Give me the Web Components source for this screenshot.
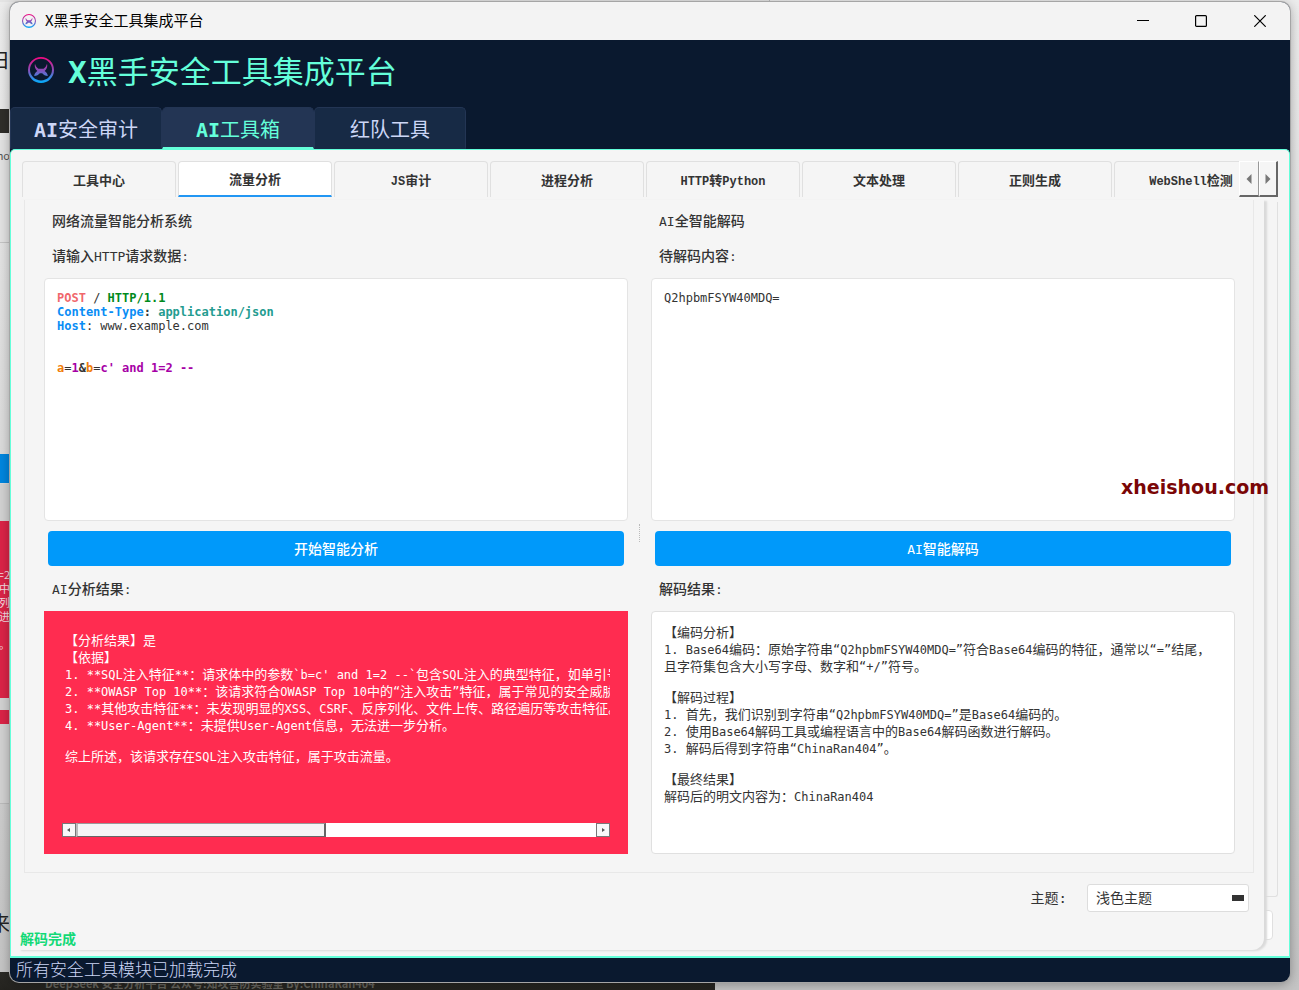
<!DOCTYPE html>
<html lang="zh-CN">
<head>
<meta charset="utf-8">
<title>X黑手安全工具集成平台</title>
<style>
html, body { margin: 0; height: 100%; overflow: hidden; }
body {
  --mono: "DejaVu Sans Mono", "Noto Sans CJK SC", monospace;
  --sans: "Noto Sans CJK SC", sans-serif;
  --song: "DejaVu Sans Mono", "Noto Sans CJK SC", monospace;
  --navy: #0a192f;
  --teal: #64ffda;
  --paper: #f5f5f5;
  --line: #e0e0e0;
  --ink: #333;
  font-family: var(--mono);
  color: var(--ink);
}
</style>
</head>
<body>
<app-desktop>
  <app-window>
    <title-bar slot="title" caption="X黑手安全工具集成平台"></title-bar>
    <app-header slot="header"><b>X</b>黑手安全工具集成平台</app-header>
    <module-tabs slot="header"></module-tabs>
    <tool-tabs slot="body"></tool-tabs>
    <work-sheet slot="body">
      <work-column heading="网络流量智能分析系统" label="请输入HTTP请求数据:" action="开始智能分析" outcome="AI分析结果:">
        <http-editor slot="input"></http-editor>
        <result-view slot="output" kind="alert"></result-view>
      </work-column>
      <work-column heading="AI全智能解码" label="待解码内容:" action="AI智能解码" outcome="解码结果:">
        <plain-editor slot="input" value="Q2hpbmFSYW40MDQ="></plain-editor>
        <result-view slot="output" kind="plain"></result-view>
      </work-column>
    </work-sheet>
    <span slot="status">所有安全工具模块已加载完成</span>
  </app-window>
  <water-mark>xheishou.com</water-mark>
</app-desktop>

<script>
const define = (name, html, setup) => {
  const template = document.createElement('template');
  template.innerHTML = '<style>*{box-sizing:border-box}</style>' + html;
  customElements.define(name, class extends HTMLElement {
    constructor() {
      super();
      this.attachShadow({ mode: 'open' }).append(template.content.cloneNode(true));
    }
    connectedCallback() { if (setup) setup(this, this.shadowRoot); }
  });
};

/* Latin runs are set one step smaller than the Chinese text around them. */
const withLatin = text => text
  .replace(/&/g, '&amp;').replace(/</g, '&lt;')
  .replace(/[\x20-\x7e“”]+/g, run => `<code>${run}</code>`);

define('brand-logo', `
<style>:host{display:block;width:26px;height:26px} svg{display:block;width:100%;height:100%}</style>
<svg viewBox="0 0 26 26" aria-hidden="true">
  <defs><linearGradient id="g" x1="0" y1="0" x2="0" y2="26" gradientUnits="userSpaceOnUse">
    <stop offset="0" stop-color="#f5067f"/><stop offset=".5" stop-color="#8a4fb8"/><stop offset="1" stop-color="#00b0ff"/>
  </linearGradient></defs>
  <path fill="url(#g)" fill-rule="evenodd" d="M13 0a13 13 0 1 1 0 26a13 13 0 1 1 0-26zM13 1.8a11 10.8 0 1 0 0 21.6a11 10.8 0 1 0 0-21.6z"/>
  <path fill="url(#g)" d="M7 6.800C7.600 9 8.800 10.600 10.400 11.800h5.200C17.200 10.600 18.400 9 19 6.800C19.800 9.600 18.800 12.200 16.600 14C18.600 15.200 19.600 17 19.800 19C17.400 19 15.400 17.800 14.200 16.200h-2.400C10.600 17.800 8.600 19 6.200 19C6.400 17 7.400 15.200 9.400 14C7.200 12.200 6.200 9.600 7 6.800z"/>
</svg>`);

define('app-desktop', `
<style>
:host{display:block;position:relative;height:100%;overflow:hidden;background:linear-gradient(#ececec,#d9d9d9 50%,#c4c4c4)}
.back{position:absolute;inset:0;overflow:hidden;font:11px/14px var(--sans);white-space:nowrap}
.back>*{position:absolute;left:0;width:10px;overflow:hidden;display:flex;flex-direction:column;align-items:flex-end}
.dark{top:109px;height:24px;background:#2f2e2a}
.pale{top:140px;height:103px;background:#e2e2e2;border-bottom:1px solid #c4c4c4;color:#555;padding-top:8px}
.low{top:484px;height:320px;background:#d2d2d2;border-bottom:1px solid #bbb}
.blue{top:454px;height:29px;background:#0086df}
.red{top:521px;height:177px;background:#db2447;color:#f6dce1;padding-top:46px}
.red2{top:710px;height:14px;background:#db2447}
.word{color:#222;font-size:20px;line-height:30px}
.back .strip{top:972px;display:block;width:715px;height:18px;background:linear-gradient(#2b2a26,#24231f);color:#66645e;font-weight:700;padding:4px 0 0 45px}
.back .top{top:0;height:2px;width:770px;background:#e4e4e4;border-right:1px solid #bbb}
.front{position:relative;height:100%;padding:2px 9px 8px 10px}
</style>
<div class="back" aria-hidden="true">
  <div class="top"></div><div class="word" style="top:45px">日</div><div class="dark"></div><div class="pale">ho</div>
  <div class="low"></div><div class="blue"></div><div class="red"><span>=2</span><span>中</span><span>序列</span><span>法进</span><span>&nbsp;</span><span>。</span></div><div class="red2"></div>
  <div class="word" style="top:908px">来</div>
  <div class="strip">DeepSeek 安全分析平台 公众号:知攻善防实验室 By:ChinaRan404</div>
</div>
<div class="front"><slot></slot></div>`);

define('app-window', `
<style>
:host{display:flex;flex-direction:column;height:100%;border-radius:9px;overflow:hidden;background:var(--navy);box-shadow:0 0 0 1px #a5a5a5,0 2px 12px #0005}
header{flex:none;background:var(--navy)}
main{flex:1;min-height:0;display:flex;flex-direction:column;background:var(--paper);border:1px solid var(--teal);border-bottom:0;border-radius:5px 5px 0 0;padding:11px 11px 6px 7px}
footer{flex:none;height:26px;border-top:2px solid var(--teal);padding-left:6px;font:300 17px/22px var(--sans);color:#ccd6f6}
</style>
<slot name="title"></slot>
<header><slot name="header"></slot></header>
<main><slot name="body"></slot></main>
<footer><slot name="status"></slot></footer>`);

define('title-bar', `
<style>
:host{display:flex;flex:none;align-items:center;height:38px;background:#f3f3f3;color:#000;font:15px/20px var(--sans)}
brand-logo{width:14px;height:14px;margin:0 9px 0 12px}
span{flex:1;padding-bottom:2px}
button{width:58px;height:38px;border:0;padding:0;background:none;display:grid;place-items:center}
svg{width:12px;height:12px;fill:none;stroke:#000}
button:last-child{width:60px}
</style>
<brand-logo></brand-logo><span></span>
<button aria-label="最小化"><svg viewBox="0 0 12 12"><path d="M0 5.500h12"/></svg></button>
<button aria-label="最大化"><svg viewBox="0 0 12 12"><rect x=".6" y=".6" width="10.800" height="10.800" rx="1" stroke-width="1.200"/></svg></button>
<button aria-label="关闭"><svg viewBox="0 0 12 12"><path d="M.3.3l11.400 11.400M11.700.3L.3 11.700" stroke-width="1.200"/></svg></button>`,
(el, root) => { root.querySelector('span').textContent = el.getAttribute('caption'); });

define('app-header', `
<style>
:host{display:block}
h1{display:flex;align-items:center;gap:14px;height:67px;margin:0;padding:0 0 7px 18px;font:400 31px/40px var(--song);color:var(--teal)}
span{padding-top:4px}
</style>
<h1><brand-logo></brand-logo><span><slot></slot></span></h1>`);

define('module-tabs', `
<style>
:host{display:block}
nav{display:flex;height:42px}
button{width:152px;border:1px solid #233554;border-bottom:2px solid #172a45;border-radius:5px 5px 0 0;background:#172a45;color:#ccd6f6;font:20px/28px var(--song);padding:4px 0 0}
button[aria-selected=true]{background:#233554;color:var(--teal);border-bottom-color:var(--teal)}
b{font-weight:700}
</style>
<nav role="tablist">
  <button role="tab"><b>AI</b>安全审计</button>
  <button role="tab" aria-selected="true"><b>AI</b>工具箱</button>
  <button role="tab">红队工具</button>
</nav>`);

define('tool-tabs', `
<style>
:host{display:flex;flex:none;height:36px;margin-left:4px}
nav{display:flex;flex:1;gap:2px;overflow:hidden}
nav button{flex:none;width:154px;border:1px solid var(--line);border-bottom:0;border-radius:4px 4px 0 0;background:none;color:var(--ink);font:700 13px/20px var(--mono);padding:2px 0 0}
nav button[aria-selected=true]{background:#fff;border-bottom:2px solid #2196f3}
code{font:700 12px/1 "Liberation Mono",monospace}
.step{width:20px;padding:0;background:var(--paper);border:solid;border-width:1px 1px 2px 1px;border-color:#fff #999 #666 #fff}
.step:last-child{width:19px;border-right:2px solid #666}
.step svg{display:block;width:6px;height:10px;margin:auto;fill:#777}
</style>
<nav role="tablist">
  <button role="tab">工具中心</button>
  <button role="tab" aria-selected="true">流量分析</button>
  <button role="tab"><code>JS</code>审计</button>
  <button role="tab">进程分析</button>
  <button role="tab"><code>HTTP</code>转<code>Python</code></button>
  <button role="tab">文本处理</button>
  <button role="tab">正则生成</button>
  <button role="tab"><code>WebShell</code>检测</button>
</nav>
<button class="step" aria-label="向左"><svg viewBox="0 0 6 10"><path d="M5.500 0v10L.5 5z"/></svg></button>
<button class="step" aria-label="向右"><svg viewBox="0 0 6 10"><path d="M.5 0v10l5-5z"/></svg></button>`);

define('work-sheet', `
<style>
:host{flex:1;min-height:0;display:flex;position:relative;padding:3px 14px 0 0}
.pane{position:absolute;top:5px;right:0;bottom:53px;width:20px;border:1px solid var(--line);border-width:0 1px 1px 0;border-radius:0 0 3px 0}
.field{position:absolute;right:5px;bottom:10px;width:20px;height:30px;background:#fff;border:1px solid var(--line);border-radius:4px}
.sheet{position:relative;flex:1;display:flex;flex-direction:column;padding:0 10px 0 6px;background:var(--paper);border-radius:0 0 12px 0;box-shadow:3px 1px 2px #dadada}
.frame{flex:1;min-height:0;display:grid;grid-template-columns:1fr 23px 1fr;border:1px solid #e8e8e8;border-top:0;padding:11px 18px 18px 19px}
.grip{align-self:center;justify-self:center;height:18px;border-left:1px dotted #bbb}
.theme{display:flex;justify-content:flex-end;align-items:center;gap:20px;padding:11px 5px 0 0;font-size:14px;line-height:20px}
select{appearance:none;width:162px;height:28px;padding:0 8px;border:1px solid #ddd;border-radius:3px;color:var(--ink);font:14px/20px var(--mono);background:linear-gradient(#333,#333) right 4px center/12px 6px no-repeat #fff}
.state{height:38px;padding-top:17px;margin-left:-4px;font:700 14px/20px var(--mono);color:#13d977}
</style>
<div class="pane"></div><div class="field"></div>
<section class="sheet">
  <div class="frame"><slot name="left"></slot><div class="grip"></div><slot name="right"></slot></div>
  <div class="theme"><label for="theme">主题:</label><select id="theme"><option>浅色主题</option><option>深色主题</option></select></div>
  <div class="state" role="status">解码完成</div>
</section>`,
el => {
  const [left, right] = el.children;
  left.slot = 'left';
  right.slot = 'right';
});

define('work-column', `
<style>
:host{display:flex;flex-direction:column;min-width:0;min-height:0}
h2,h3{flex:none;height:20px;margin:0;padding-left:8px;font:500 14px/20px var(--mono)}
h2{margin-bottom:15px}
h3{margin-bottom:12px}
code{font:500 13px/1 var(--mono)}
.box{flex:1;min-height:0;display:flex}
button{flex:none;height:35px;margin:10px 4px 13px;border:0;border-radius:4px;background:#0099fa;color:#fff;font:500 14px/20px var(--mono)}
</style>
<h2></h2><h3></h3>
<div class="box"><slot name="input"></slot></div>
<button></button>
<h3></h3>
<div class="box"><slot name="output"></slot></div>`,
(el, root) => {
  const [label, outcome] = root.querySelectorAll('h3');
  root.querySelector('h2').innerHTML = withLatin(el.getAttribute('heading'));
  label.innerHTML = withLatin(el.getAttribute('label'));
  outcome.innerHTML = withLatin(el.getAttribute('outcome'));
  root.querySelector('button').innerHTML = withLatin(el.getAttribute('action'));
});

define('http-editor', `
<style>
:host{flex:1;min-width:0;display:flex}
div{flex:1;overflow:hidden;background:#fff;border:1px solid #e4e4e4;border-radius:4px;padding:12px;font:12px/14px var(--mono);white-space:pre;outline:0}
b{font-weight:700}
.m{color:#f0676c}.v{color:#008a1c}.k{color:#0a8df5}.t{color:#249c90}.p{color:#f07d0a}.s{color:#a600a6}
</style>
<div contenteditable="true" role="textbox" aria-multiline="true" aria-label="请输入HTTP请求数据" spellcheck="false"><b class="m">POST</b> / <b class="v">HTTP/1.1</b>
<b class="k">Content-Type</b><b>:</b> <b class="t">application/json</b>
<b class="k">Host</b>: www.example.com


<b class="p">a</b>=<b class="s">1</b><b>&amp;</b><b class="p">b</b>=<b class="s">c' and 1=2 --</b></div>`);

define('plain-editor', `
<style>
:host{flex:1;min-width:0;display:flex}
textarea{flex:1;min-width:0;resize:none;overflow:hidden;background:#fff;border:1px solid #e4e4e4;border-radius:4px;padding:12px;font:12px/14px var(--mono);color:var(--ink);outline:0}
</style>
<textarea aria-label="待解码内容" spellcheck="false"></textarea>`,
(el, root) => { root.querySelector('textarea').value = el.getAttribute('value'); });

const REPORTS = {
  alert: [
    ['【分析结果】是', '【依据】',
     "1. **SQL注入特征**\uff1a请求体中的参数`b=c' and 1=2 --`包含SQL注入的典型特征\uff0c如单引号",
     '2. **OWASP Top 10**\uff1a该请求符合OWASP Top 10中的“注入攻击”特征\uff0c属于常见的安全威胁',
     '3. **其他攻击特征**\uff1a未发现明显的XSS、CSRF、反序列化、文件上传、路径遍历等攻击特征。',
     '4. **User-Agent**\uff1a未提供User-Agent信息\uff0c无法进一步分析。'],
    ['综上所述\uff0c该请求存在SQL注入攻击特征\uff0c属于攻击流量。']
  ],
  plain: [
    ['【编码分析】', '1. Base64编码\uff1a原始字符串“Q2hpbmFSYW40MDQ=”符合Base64编码的特征\uff0c通常以“=”结尾\uff0c',
     '且字符集包含大小写字母、数字和“+/”符号。'],
    ['【解码过程】', '1. 首先\uff0c我们识别到字符串“Q2hpbmFSYW40MDQ=”是Base64编码的。',
     '2. 使用Base64解码工具或编程语言中的Base64解码函数进行解码。',
     '3. 解码后得到字符串“ChinaRan404”。'],
    ['【最终结果】', '解码后的明文内容为\uff1aChinaRan404']
  ]
};

define('result-view', `
<style>
:host{flex:1;min-width:0;display:flex;flex-direction:column;background:#fff;border:1px solid #e0e0e0;border-radius:4px;padding:12px}
:host([kind=alert]){background:#ff2c50;border-color:#ff2c50;border-radius:0;color:#fff;padding:20px 17px 16px}
.text{flex:1;overflow:hidden;white-space:pre}
:host([kind=alert]) .text{padding-left:3px}
p{margin:0 0 14px;font:13px/17px var(--mono)}
code{font:12px/1 var(--mono)}
.bar{display:none;flex:none;height:14px;background:#fff}
:host([kind=alert]) .bar{display:flex}
.bar button{width:14px;padding:0;border:1px solid #777;background:#f8f8f8;display:grid;place-items:center}
.bar svg{width:4px;height:4px;fill:#555}
.track{flex:1}
.thumb{width:48%;height:14px;background:var(--paper);border:1px solid #666;border-top-color:#999;border-left:2px solid #bbb;border-right-width:2px}
</style>
<div class="text" role="document"></div>
<div class="bar"><button aria-label="向左滚动"><svg viewBox="0 0 4 4"><path d="M3 0v4L0 2z"/></svg></button><div class="track"><div class="thumb"></div></div><button aria-label="向右滚动"><svg viewBox="0 0 4 4"><path d="M1 0v4l3-2z"/></svg></button></div>`,
(el, root) => {
  root.querySelector('.text').innerHTML = REPORTS[el.getAttribute('kind')]
    .map(lines => `<p>${lines.map(withLatin).join('<br>')}</p>`).join('');
});

define('water-mark', `
<style>:host{position:absolute;right:30px;top:475px;font:700 19px/24px "DejaVu Sans",sans-serif;color:#7a0606}</style>
<slot></slot>`);
</script>
</body>
</html>
